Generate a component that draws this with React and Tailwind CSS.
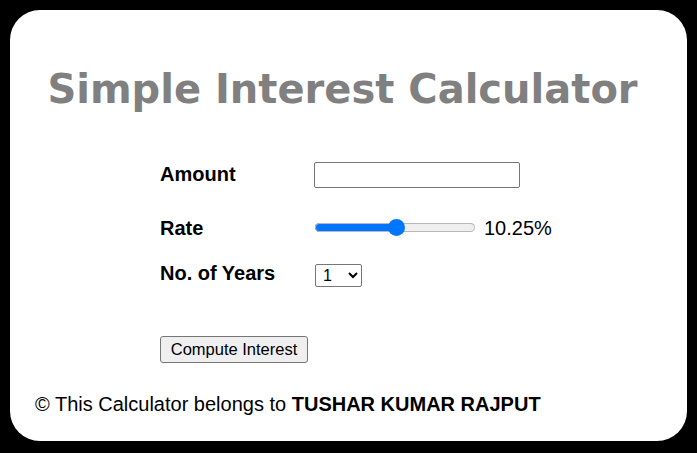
import { useState } from 'react'

export default function App() {
  const [rate, setRate] = useState(10.25)
  const [years, setYears] = useState(1)
  const thumbPct = ((8.5 + (rate / 20) * 143) / 160) * 100

  return (
    <div className="min-h-screen w-full bg-black p-[10px]" style={{ fontFamily: '"Liberation Sans", Arial, sans-serif' }}>
      <div className="h-[431px] rounded-[30px] bg-white flex flex-col">
        {/* Heading */}
        <h1
          className="mt-[49px] pr-[12px] text-center text-[40px] leading-[60px] font-bold text-[#808080]"
          style={{ fontFamily: '"DejaVu Sans", Verdana, sans-serif' }}
        >
          Simple Interest Calculator
        </h1>

        {/* Form */}
        <div className="mt-[43px] ml-[150px] flex flex-col text-black">
          <div className="flex items-center h-[26px]">
            <label className="w-[154px] text-[20px] font-bold -mt-[3px]">Amount</label>
            <input
              type="number"
              className="w-[206px] h-[26px] border border-[#767676] rounded-[2px] px-1 text-[14px]"
            />
          </div>

          <div className="flex items-center h-[26px] mt-[26px]">
            <label className="w-[154px] text-[20px] font-bold mt-[1px]">Rate</label>
            <div className="w-[161px] h-[20px] flex items-center">
              <input
                type="range"
                min="0"
                max="20"
                step="0.25"
                value={rate}
                onChange={e => setRate(Number(e.target.value))}
                style={{ background: `linear-gradient(to right, #0075ff ${thumbPct}%, #efefef ${thumbPct}%)` }}
                className="appearance-none ml-px w-[160px] h-[9px] rounded-full shadow-[inset_0_0_0_1px_#b8b8b8] cursor-pointer [&::-webkit-slider-thumb]:appearance-none [&::-webkit-slider-thumb]:w-[17px] [&::-webkit-slider-thumb]:h-[17px] [&::-webkit-slider-thumb]:rounded-full [&::-webkit-slider-thumb]:bg-[#0075ff]"
              />
            </div>
            <span className="ml-[9px] text-[20px] mt-[1px]">{rate}%</span>
          </div>

          <div className="flex items-center h-[26px] mt-[21px]">
            <label className="w-[154px] text-[20px] font-bold -mt-[2px]">No. of Years</label>
            <select
              value={years}
              onChange={e => setYears(e.target.value)}
              className="ml-px mt-[2px] w-[47px] h-[23px] border border-[#767676] rounded-[2px] text-[16px] pl-[3px]"
            >
              {Array.from({ length: 10 }, (_, i) => (
                <option key={i + 1} value={i + 1}>{i + 1}</option>
              ))}
            </select>
          </div>

          <div className="mt-[49px]">
            <button className="h-[27px] w-[148px] border border-[#767676] rounded-[3px] bg-[#efefef] text-[16.5px] leading-none">
              Compute Interest
            </button>
          </div>
        </div>

        {/* Footer */}
        <p className="mt-[26px] ml-[25px] text-[20px] text-black">
          © This Calculator belongs to <b>TUSHAR KUMAR RAJPUT</b>
        </p>
      </div>
    </div>
  )
}
